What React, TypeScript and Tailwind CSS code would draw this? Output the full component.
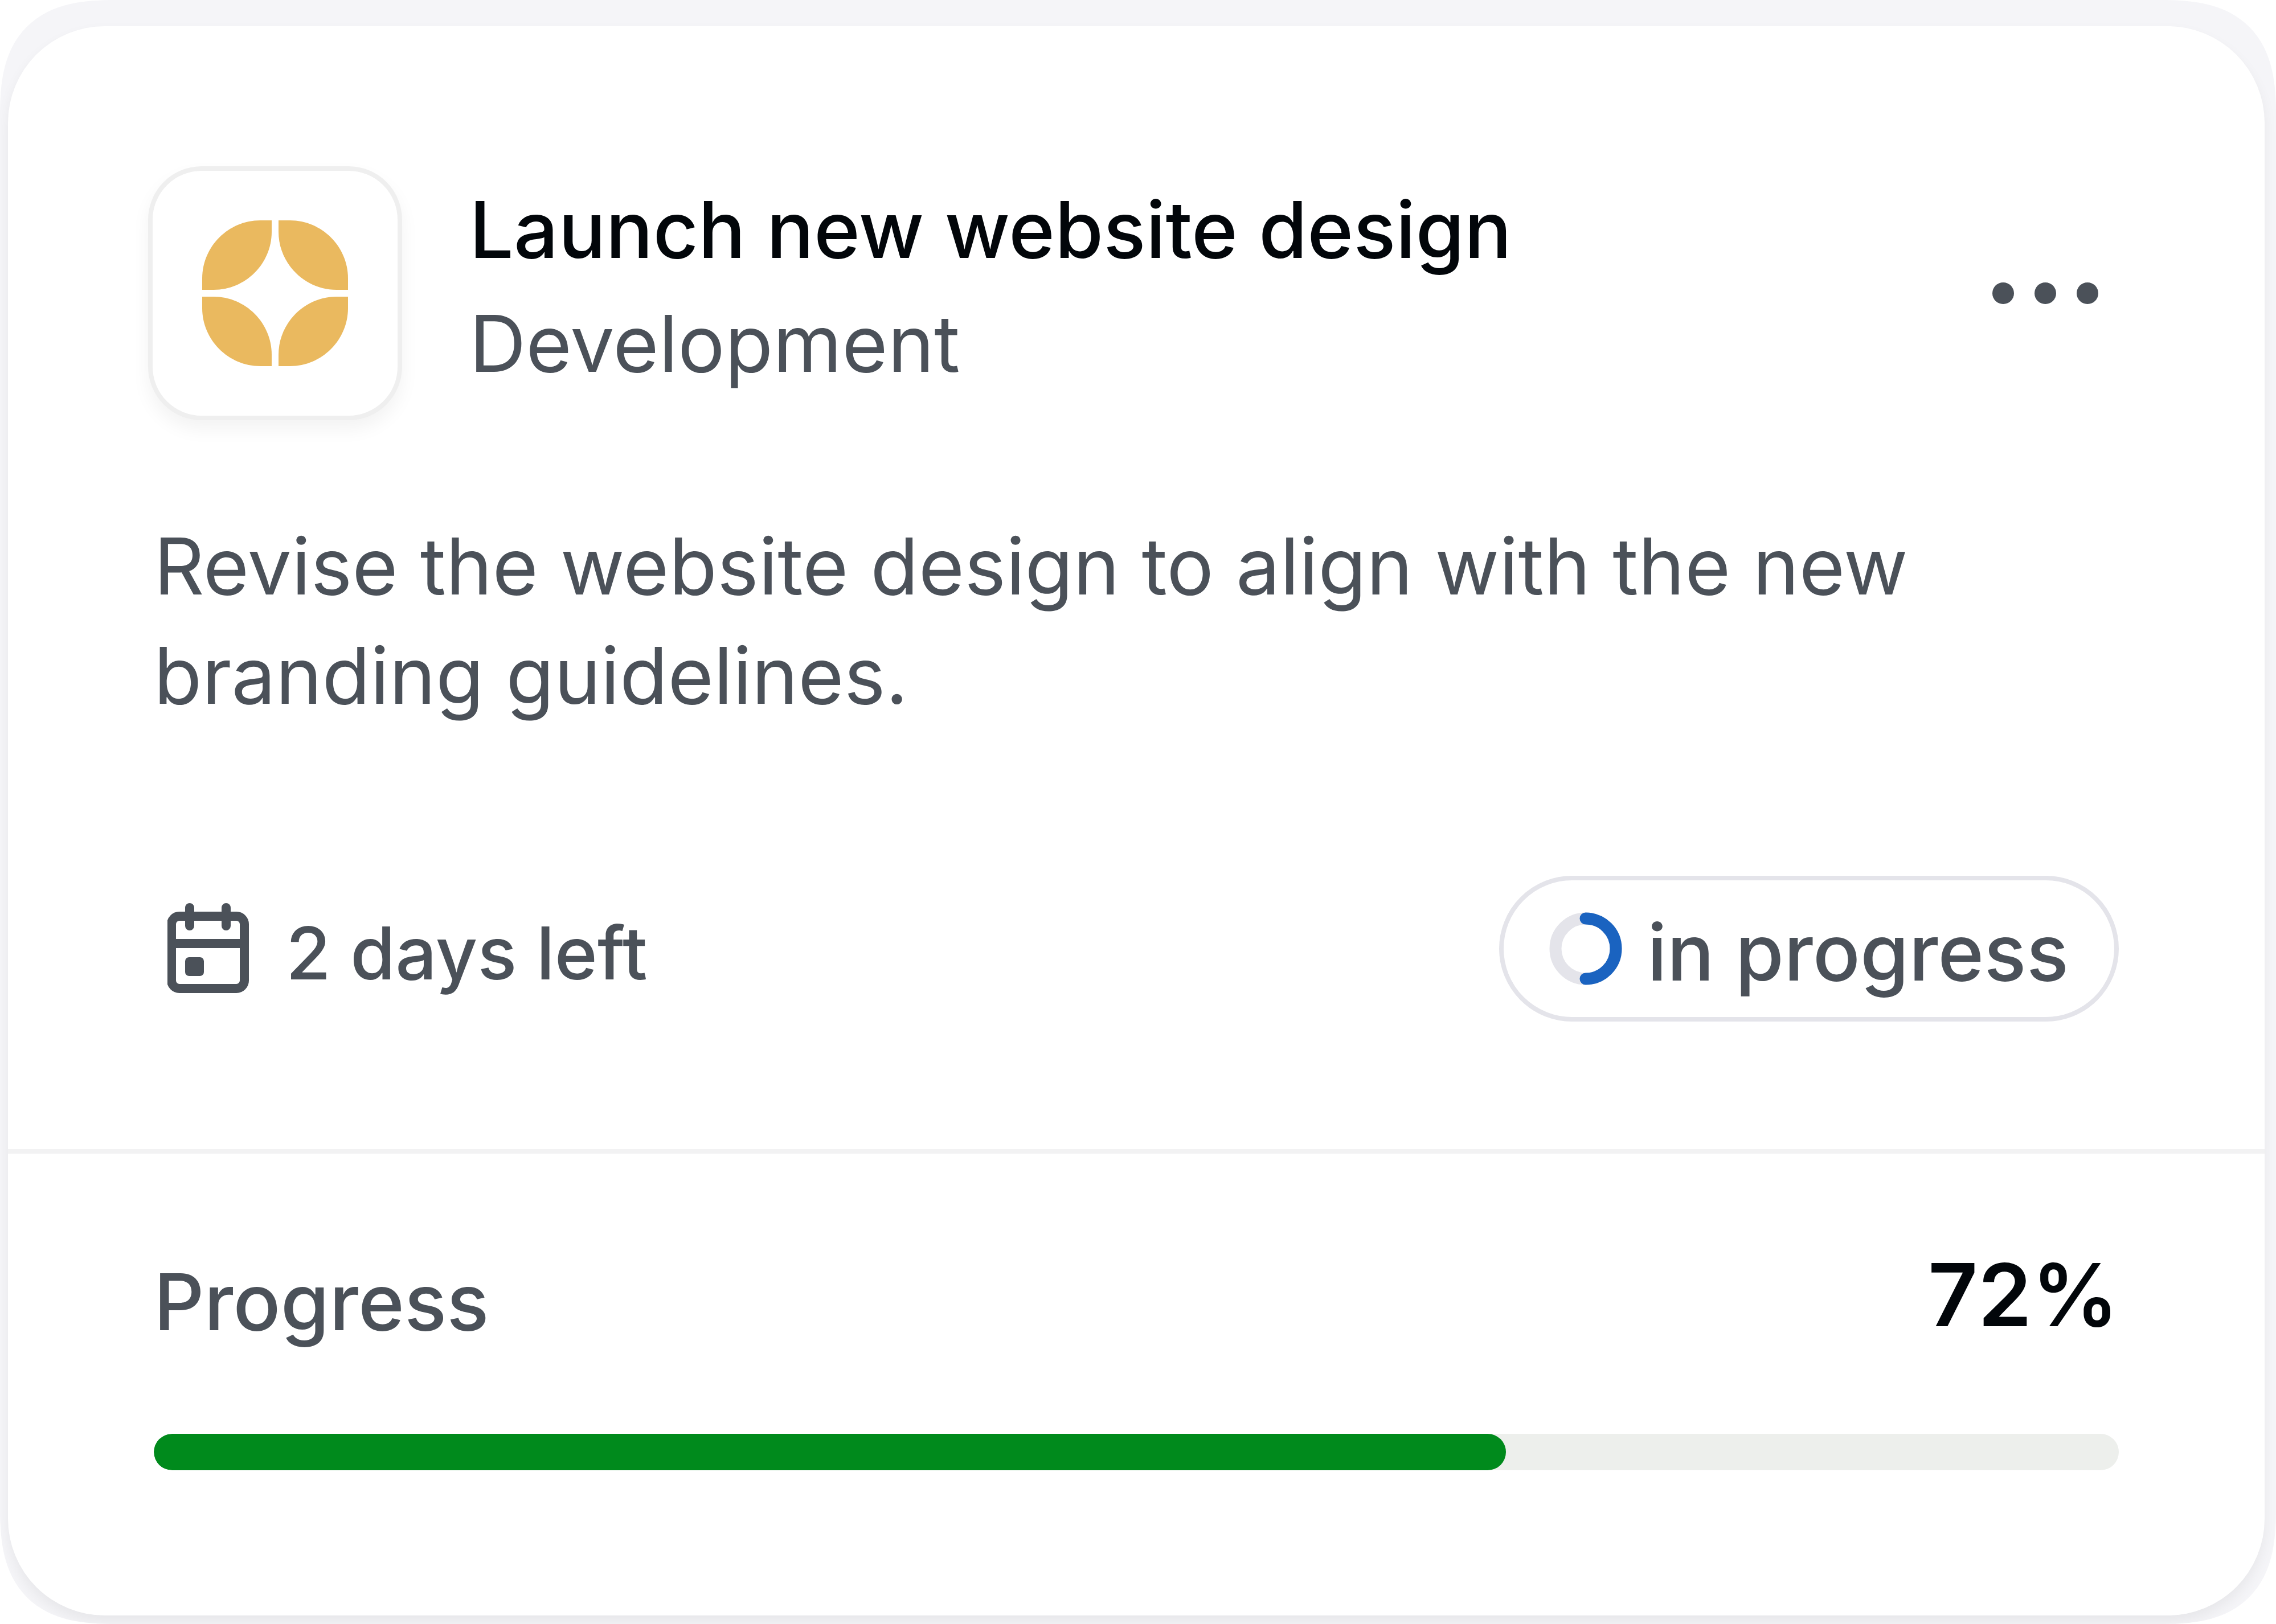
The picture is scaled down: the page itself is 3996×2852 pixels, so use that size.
import React from "react";

function BrandMark() {
  return (
    <svg viewBox="0 0 256 256" className="h-64 w-64" fill="#eab95f" aria-hidden="true">
      <path d="M0 122V102C0 46 46 0 102 0H122V20C122 76 76 122 20 122Z" />
      <path d="M134 0H154C210 0 256 46 256 102V122H236C180 122 134 76 134 20Z" />
      <path d="M0 134H20C76 134 122 180 122 236V256H102C46 256 0 210 0 154Z" />
      <path d="M236 134H256V154C256 210 210 256 154 256H134V236C134 180 180 134 236 134Z" />
    </svg>
  );
}

function CalendarIcon() {
  return (
    <svg viewBox="0 0 144 160" className="h-40 w-36" fill="none" stroke="#4b5159" strokeLinecap="round" aria-hidden="true">
      <rect x="7" y="23" width="128" height="127" rx="14" strokeWidth="16" />
      <path d="M7 71H135" strokeWidth="16" strokeLinecap="butt" />
      <path d="M39 8V40M103 8V40" strokeWidth="16" />
      <rect x="31" y="95" width="33" height="33" rx="7" fill="#4b5159" stroke="none" />
    </svg>
  );
}

function Spinner() {
  return (
    <svg viewBox="0 0 128 128" className="h-32 w-32" fill="none" strokeWidth="21" aria-hidden="true">
      <circle cx="64" cy="64" r="53" stroke="#e4e4ea" />
      <path d="M64 11A53 53 0 0 1 64 117" stroke="#1a63c0" strokeLinecap="round" />
    </svg>
  );
}

export default function App() {
  const progress = 72;
  return (
    <div className="min-h-screen bg-white font-['Inter',sans-serif] text-[#4b5159]">
      <main className="flex min-h-screen flex-col overflow-hidden rounded-[204px] bg-[#f5f5f8] pt-[46px] pr-[20px] pb-[15px] pl-[14px] [corner-shape:superellipse(1.4)]">
        <article className="flex grow flex-col rounded-[170px] bg-white shadow-[0_12px_24px_rgba(0,0,0,0.06)]">
          <div className="px-64 pt-[246px]">
            <header className="flex items-center">
              <div className="-ml-2.5 flex h-[446px] w-[446px] shrink-0 items-center justify-center rounded-[94px] border-8 border-[#efefef] bg-white shadow-[0_16px_32px_rgba(0,0,0,0.05)]">
                <BrandMark />
              </div>
              <div className="ml-[118px] grow pb-6">
                <h1 className="text-[138px] leading-[200px] font-medium text-[#02060a]">Launch new website design</h1>
                <p className="text-[138px] leading-[200px]">Development</p>
              </div>
              <button type="button" aria-label="More options" className="flex shrink-0 gap-9 p-9">
                <span className="size-[38px] rounded-full bg-[#4b5159]" />
                <span className="size-[38px] rounded-full bg-[#4b5159]" />
                <span className="size-[38px] rounded-full bg-[#4b5159]" />
              </button>
            </header>
            <p className="mt-40 text-[138px] leading-[192px]">
              Revise the website design to align with the new branding guidelines.
            </p>
            <div className="mt-64 flex items-center justify-between">
              <div className="flex items-center gap-16 pl-6">
                <CalendarIcon />
                <span className="pt-4 text-[128px] leading-[192px] font-medium">2 days left</span>
              </div>
              <div className="flex h-64 items-center gap-11 rounded-full border-8 border-[#e4e4ea] px-20">
                <Spinner />
                <span className="pt-3 text-[138px] leading-[192px] font-medium">in progress</span>
              </div>
            </div>
          </div>
          <hr className="mt-56 border-t-8 border-[#f2f2f3]" />
          <section className="px-64 pt-[164px]">
            <div className="flex items-start justify-between">
              <h2 id="progress-label" className="text-[138px] leading-[192px] font-medium">Progress</h2>
              <span className="text-[152px] leading-[168px] font-semibold text-[#02060a]">{progress}%</span>
            </div>
            <div
              role="progressbar"
              aria-labelledby="progress-label"
              aria-valuenow={progress}
              aria-valuemin={0}
              aria-valuemax={100}
              className="mt-34 h-16 overflow-hidden rounded-full bg-[#edefec]"
            >
              <div className="h-full rounded-full bg-[#008a1c]" style={{ width: "68.8%" }} />
            </div>
          </section>
        </article>
      </main>
    </div>
  );
}
